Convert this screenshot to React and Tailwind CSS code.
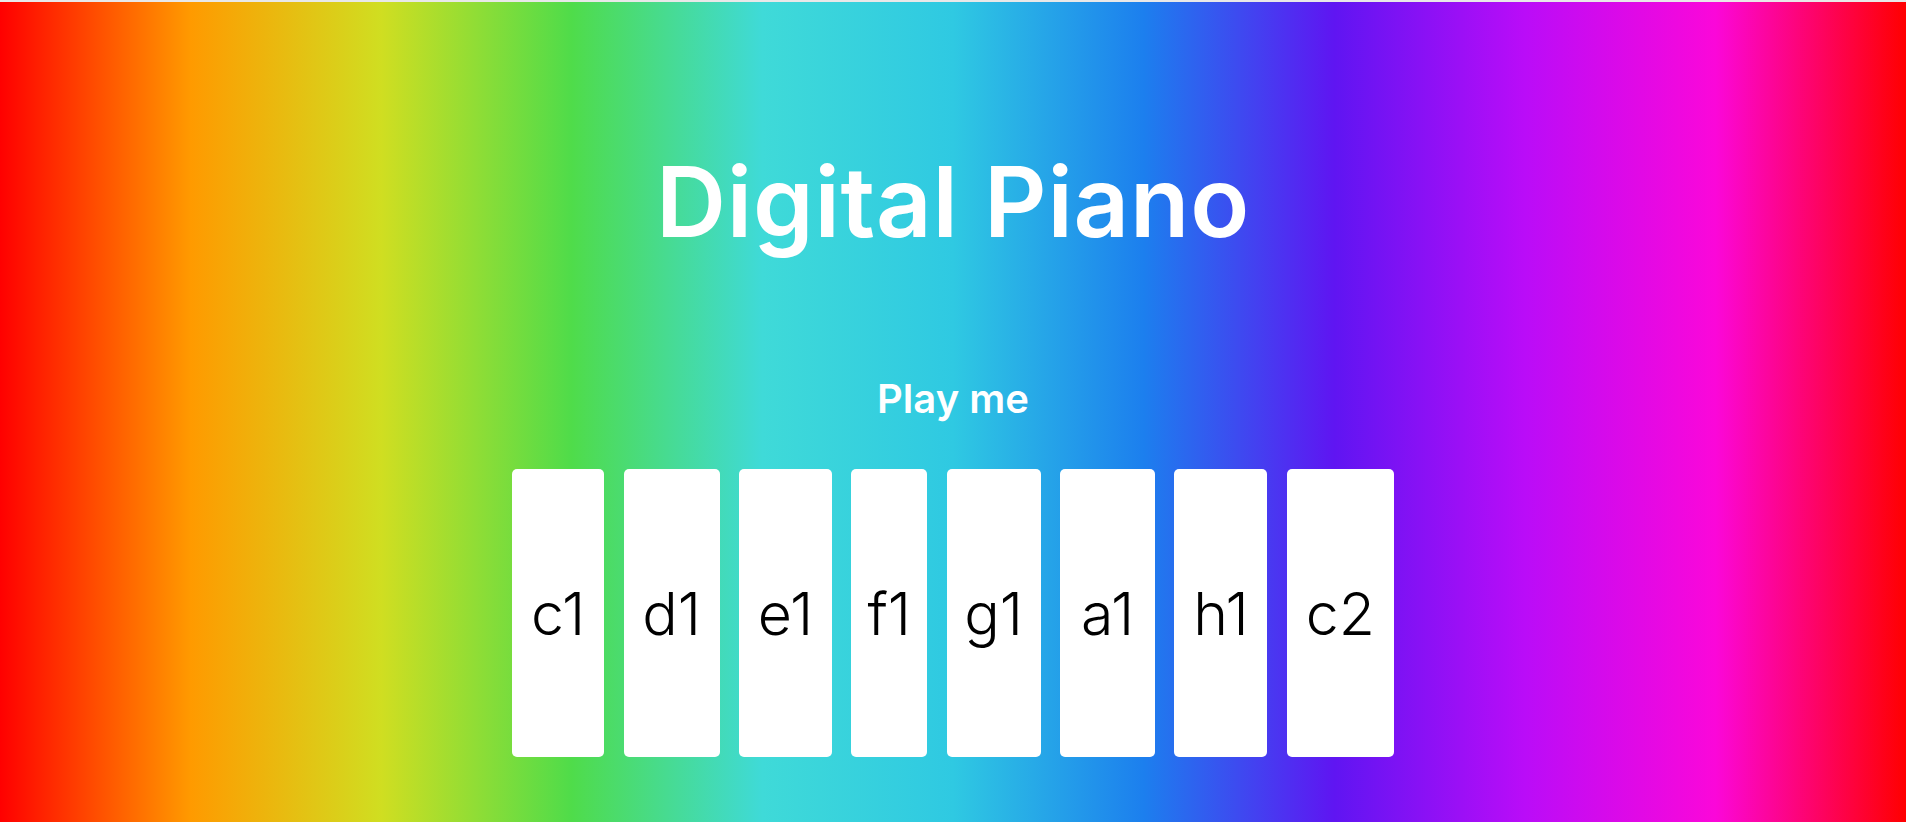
const keys = [
  { note: 'c1', w: 'w-[92px]' },
  { note: 'd1', w: 'w-[96px]' },
  { note: 'e1', w: 'w-[93px]' },
  { note: 'f1', w: 'w-[76px]' },
  { note: 'g1', w: 'w-[94px]' },
  { note: 'a1', w: 'w-[95px]' },
  { note: 'h1', w: 'w-[93px]' },
  { note: 'c2', w: 'w-[107px]' },
];

const App = () => {
  return (
    <div className="min-h-screen bg-[#e8e8e8] pt-[2px] font-['Inter','Liberation_Sans',sans-serif]">
      <main className="flex min-h-[820px] flex-col items-center bg-[linear-gradient(90deg,#ff0000_0%,#ff9a00_10%,#d0de21_20%,#4fdc4a_30%,#3fdad8_40%,#2fc9e2_50%,#1c7fee_60%,#5f15f2_70%,#ba0cf8_80%,#fb07d9_90%,#ff0000_100%)] pt-[151px]">
        {/* Header */}
        <h1 className="text-[97px] font-semibold leading-none tracking-[0.8px] text-white">
          Digital Piano
        </h1>

        <h2 className="mt-[129px] text-[40px] font-semibold leading-none text-white">
          Play me
        </h2>

        {/* Keys */}
        <div className="mt-[50px] flex gap-[19.4px]">
          {keys.map((key) => (
            <button
              key={key.note}
              className={`flex h-[288px] ${key.w} items-center justify-center rounded-[5px] bg-white text-[59px] font-light leading-none text-black`}
            >
              {key.note}
            </button>
          ))}
        </div>
      </main>
    </div>
  );
};

export default App;
